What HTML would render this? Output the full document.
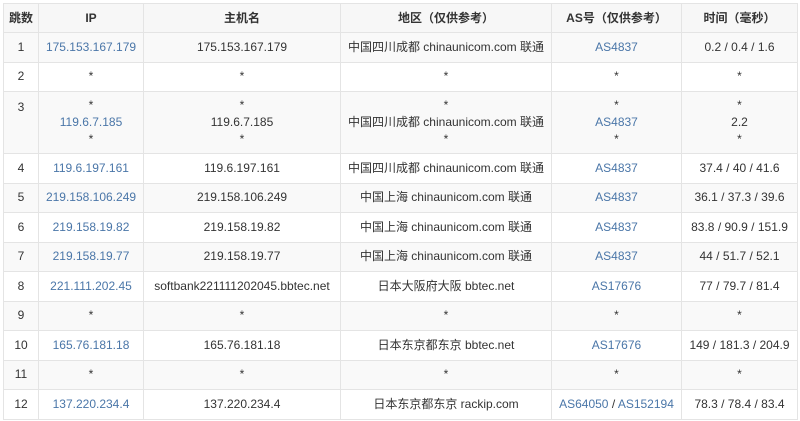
<!DOCTYPE html><html><head><style>
body{margin:0;background:#fff;font-family:"Liberation Sans","Noto Sans CJK SC",sans-serif;font-size:12px;color:#333}
table{position:absolute;left:3px;top:3px;border-collapse:collapse;width:794px;table-layout:fixed}
td,th{border:1px solid #e4e4e4;text-align:center;padding:0;line-height:15px}
th{height:28px;font-weight:bold;background:#f7f7f7}
td{height:28.5px}
tr:nth-child(odd) td{background:#f9f9f9}
tr.t td{height:61px;line-height:17px}
tr.t td.n{height:53px;vertical-align:top;padding-top:8px;line-height:15px}
a{color:#4a76a8;text-decoration:none}
</style></head><body>
<table>
<colgroup><col style="width:35px"><col style="width:105px"><col style="width:197px"><col style="width:211px"><col style="width:130px"><col style="width:116px"></colgroup>
<thead><tr><th>跳数</th><th>IP</th><th>主机名</th><th>地区（仅供参考）</th><th>AS号（仅供参考）</th><th>时间（毫秒）</th></tr></thead>
<tbody>
<tr><td>1</td><td><a>175.153.167.179</a></td><td>175.153.167.179</td><td>中国四川成都 chinaunicom.com 联通</td><td><a>AS4837</a></td><td>0.2 / 0.4 / 1.6</td></tr>
<tr><td>2</td><td>*</td><td>*</td><td>*</td><td>*</td><td>*</td></tr>
<tr class="t"><td class="n">3</td><td>*<br><a>119.6.7.185</a><br>*</td><td>*<br>119.6.7.185<br>*</td><td>*<br>中国四川成都 chinaunicom.com 联通<br>*</td><td>*<br><a>AS4837</a><br>*</td><td>*<br>2.2<br>*</td></tr>
<tr><td>4</td><td><a>119.6.197.161</a></td><td>119.6.197.161</td><td>中国四川成都 chinaunicom.com 联通</td><td><a>AS4837</a></td><td>37.4 / 40 / 41.6</td></tr>
<tr><td>5</td><td><a>219.158.106.249</a></td><td>219.158.106.249</td><td>中国上海 chinaunicom.com 联通</td><td><a>AS4837</a></td><td>36.1 / 37.3 / 39.6</td></tr>
<tr><td>6</td><td><a>219.158.19.82</a></td><td>219.158.19.82</td><td>中国上海 chinaunicom.com 联通</td><td><a>AS4837</a></td><td>83.8 / 90.9 / 151.9</td></tr>
<tr><td>7</td><td><a>219.158.19.77</a></td><td>219.158.19.77</td><td>中国上海 chinaunicom.com 联通</td><td><a>AS4837</a></td><td>44 / 51.7 / 52.1</td></tr>
<tr><td>8</td><td><a>221.111.202.45</a></td><td>softbank221111202045.bbtec.net</td><td>日本大阪府大阪 bbtec.net</td><td><a>AS17676</a></td><td>77 / 79.7 / 81.4</td></tr>
<tr><td>9</td><td>*</td><td>*</td><td>*</td><td>*</td><td>*</td></tr>
<tr><td>10</td><td><a>165.76.181.18</a></td><td>165.76.181.18</td><td>日本东京都东京 bbtec.net</td><td><a>AS17676</a></td><td>149 / 181.3 / 204.9</td></tr>
<tr><td>11</td><td>*</td><td>*</td><td>*</td><td>*</td><td>*</td></tr>
<tr><td>12</td><td><a>137.220.234.4</a></td><td>137.220.234.4</td><td>日本东京都东京 rackip.com</td><td><a>AS64050</a> / <a>AS152194</a></td><td>78.3 / 78.4 / 83.4</td></tr>
</tbody></table>
</body></html>
